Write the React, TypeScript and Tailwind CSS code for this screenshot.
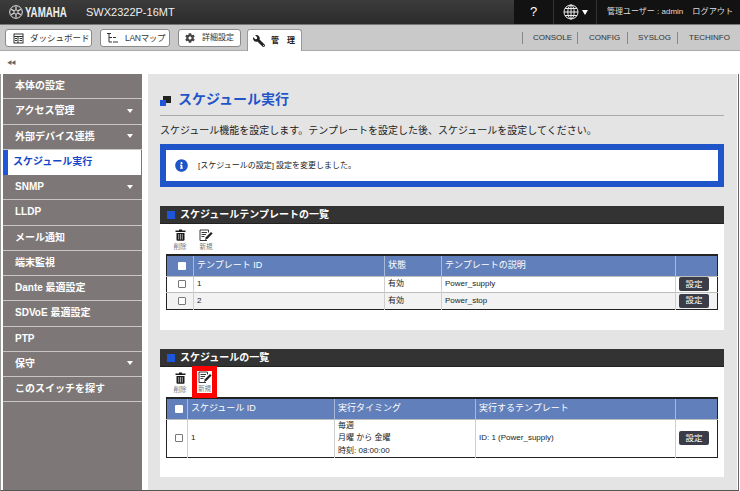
import React from "react";
import { FaWrench, FaCog, FaInfoCircle } from "react-icons/fa";

const font = { fontFamily: '"Liberation Sans","Noto Sans CJK JP",sans-serif' };

function TopBtn({ icon, label, cls }: { icon: React.ReactNode; label: string; cls: string }) {
  return (
    <div className={`${cls} h-[18px] shrink-0 flex items-center bg-white border border-[#8a8a8a] rounded-[3px] text-[8.5px] text-[#333] whitespace-nowrap`}>
      {icon}
      <span>{label}</span>
    </div>
  );
}

const DashIcon = () => (
  <svg width="11" height="11" viewBox="0 0 11 11" fill="none" stroke="#333" strokeWidth="1">
    <rect x="1" y="1" width="9" height="9" />
    <path d="M1 3.5h9M5 3.5v6.5M6.5 5.5h2.5M6.5 7.5h2.5M2 5.5h2M2 7.5h2" />
  </svg>
);
const MapIcon = () => (
  <svg width="12" height="12" viewBox="0 0 12 12" fill="none" stroke="#333" strokeWidth="1">
    <path d="M1 1.5h4M3 1.5v8.5M3 5.5h3M3 10h3M7 10h5M7 5.5h3" />
  </svg>
);
const Globe = () => (
  <svg width="16" height="16" viewBox="0 0 16 16" fill="none" stroke="#eee" strokeWidth="1">
    <circle cx="8" cy="8" r="7" />
    <ellipse cx="8" cy="8" rx="3.2" ry="7" />
    <path d="M8 1v14M1 8h14M2 4.5h12M2 11.5h12" />
  </svg>
);
const Emblem = () => (
  <svg width="14" height="14" viewBox="0 0 14 14" fill="none" stroke="#e8e8e8">
    <circle cx="7" cy="7" r="6.3" strokeWidth="1" />
    <circle cx="7" cy="7" r="2" strokeWidth="0.8" />
    <path d="M7 1.5v3.5M7 9v3.5M2.2 4.2l3 1.8M8.8 8l3 1.8M11.8 4.2l-3 1.8M5.2 8l-3 1.8" strokeWidth="1.1" />
  </svg>
);
const TrashIcon = () => (
  <svg width="11" height="12" viewBox="0 0 11 12">
    <path d="M4 0.5h3v1h3.5v1.5H0.5V1.5H4z" fill="#1a1a1a" />
    <path d="M1.5 4h8v6.7a1 1 0 0 1-1 1h-6a1 1 0 0 1-1-1z" fill="#1a1a1a" />
    <path d="M3.7 5v5.5M5.5 5v5.5M7.3 5v5.5" stroke="#fff" strokeWidth="0.6" />
  </svg>
);
const NewIcon = () => (
  <svg width="14" height="13" viewBox="0 0 14 13" fill="none" stroke="#222" strokeWidth="0.9">
    <path d="M8 11.5H1V1h8.5v2.5" />
    <path d="M2.5 3.5h5.5M2.5 5.5h4.5M2.5 7.5h3" />
    <path d="M6 11l.8-2.7L12 3l1.6 1.6-5 5.2z" fill="#222" stroke="none" />
  </svg>
);

function Tool({ kind, boxed }: { kind: "del" | "new"; boxed?: boolean }) {
  const del = kind === "del";
  return (
    <div
      className={
        boxed
          ? "w-[25px] h-[32px] shrink-0 -ml-[1px] -mt-[5px] border-[5px] border-[#f00] flex flex-col items-center justify-center bg-white"
          : "w-[26px] shrink-0 flex flex-col items-center"
      }
    >
      <div className="h-[14px] flex items-center">{del ? <TrashIcon /> : <NewIcon />}</div>
      <span className="text-[6.5px] leading-[9px] text-[#777] whitespace-nowrap">{del ? "削除" : "新規"}</span>
    </div>
  );
}

function SectionHead({ title }: { title: string }) {
  return (
    <div className="h-[18px] bg-[#333333] flex items-center pl-[7px] gap-[5px] border-b border-[#222]">
      <div className="w-[8px] h-[8px] bg-[#1f55d8]" />
      <span className="text-white text-[10px] font-bold leading-none">{title}</span>
    </div>
  );
}

function Check({ head }: { head?: boolean }) {
  return (
    <div className={`mx-auto w-[8px] h-[8px] rounded-[1px] ${head ? "bg-white" : "bg-white border border-[#777]"}`} />
  );
}

const SetBtn = () => (
  <div className="ml-[3px] w-[30px] h-[14px] flex items-center justify-center bg-[#3a3d47] rounded-[2px] text-white text-[8.5px]">設定</div>
);

const th = "border-r border-[#a9b8d6] text-left text-white font-normal text-[9px] pl-[3px] p-0";
const td = "border-r border-[#cfcfcf] text-[8px] text-[#222] pl-[3px] p-0";

const menu: [string, boolean, boolean?][] = [
  ["本体の設定", false],
  ["アクセス管理", true],
  ["外部デバイス連携", true],
  ["スケジュール実行", false, true],
  ["SNMP", true],
  ["LLDP", false],
  ["メール通知", false],
  ["端末監視", false],
  ["Dante 最適設定", false],
  ["SDVoE 最適設定", false],
  ["PTP", false],
  ["保守", true],
  ["このスイッチを探す", false],
];

export default function App() {
  return (
    <div style={font} className="w-[740px] h-[491px] overflow-hidden bg-white flex flex-col">
      {/* Header */}
      <div className="h-[24px] shrink-0 flex bg-gradient-to-b from-[#3c3c3c] to-[#2b2b2b]">
        <div className="flex items-center pl-[9px] w-[514px] shrink-0">
          <Emblem />
          <span className="ml-[2px] w-[48px] shrink-0 text-[15px] font-bold text-[#eee] scale-x-[0.65] origin-left whitespace-nowrap">YAMAHA</span>
          <span className="ml-[13px] text-[11px] text-[#eee]">SWX2322P-16MT</span>
        </div>
        <div className="flex-1 flex items-center bg-[#121212] min-w-0">
          <div className="w-[40px] shrink-0 h-full flex items-center justify-center text-white text-[13px] border-r border-[#333]">?</div>
          <div className="w-[43px] shrink-0 h-full flex items-center pl-[9px] gap-[3px] border-r border-[#333]">
            <Globe />
            <span className="w-0 h-0 border-l-[3px] border-r-[3px] border-t-[5px] border-l-transparent border-r-transparent border-t-white" />
          </div>
          <span className="ml-[10px] text-[8px] text-[#ddd] whitespace-nowrap">管理ユーザー : admin</span>
          <span className="ml-[9px] text-[8.2px] text-[#ddd] whitespace-nowrap">ログアウト</span>
        </div>
      </div>
      {/* Tabs */}
      <div className="h-[27px] shrink-0 flex items-end bg-[#c9c9c9] border-t border-[#777] border-b border-b-[#aaa] pl-[5px]">
        <div className="flex items-center gap-[8px] mb-[3px] shrink-0">
          <TopBtn cls="w-[87px] pl-[7px] gap-[6px]" icon={<DashIcon />} label="ダッシュボード" />
          <TopBtn cls="w-[70px] pl-[5px] gap-[7px] tracking-[-0.3px]" icon={<MapIcon />} label="LANマップ" />
          <TopBtn cls="w-[63px] pl-[6px] gap-[7px] !text-[8px]" icon={<FaCog className="text-[10px] text-[#444]" />} label="詳細設定" />
        </div>
        <div className="ml-[6px] w-[55px] h-[22px] shrink-0 -mb-[1px] flex items-center pl-[5px] gap-[6px] bg-white border border-b-0 border-[#999] rounded-t-[3px] text-[8px] font-bold text-[#222] whitespace-nowrap">
          <FaWrench className="text-[12px] -scale-x-100" />
          <span>管　理</span>
        </div>
        <div className="ml-[220px] mb-[7px] h-[11px] flex items-center text-[8px] text-[#333] whitespace-nowrap shrink-0">
          <span className="w-[56px] border-l border-r border-[#888] pl-[10px]">CONSOLE</span>
          <span className="w-[50px] pl-[11px] border-r border-[#888]">CONFIG</span>
          <span className="w-[50px] pl-[10px] border-r border-[#888]">SYSLOG</span>
          <span className="pl-[11px]">TECHINFO</span>
        </div>
      </div>
      {/* back arrows */}
      <div className="h-[23px] shrink-0 flex items-center pl-[7px] text-[5px] text-[#666] tracking-[-1px]">◀◀</div>
      {/* Body */}
      <div className="flex-1 flex min-h-0 pl-[2px] pr-[1px] w-[739px] border-l border-[#999] border-r border-r-[#666] border-b border-b-[#555]">
        <nav className="w-[139px] shrink-0 bg-[#7d7877] flex flex-col">
          {menu.map(([label, arrow, active]) => (
            <div
              key={label}
              className={
                active
                  ? "h-[25.25px] shrink-0 flex items-center bg-white text-[#1646c8] font-bold text-[10px] pl-[5px] pb-[1px] border-l-[5px] border-[#1f55d8] border-r border-r-[#7d7877]"
                  : "h-[25.25px] shrink-0 flex items-center justify-between text-white font-bold text-[10px] pl-[12px] pr-[9px] pb-[1px] border-b border-[#c8c6c4]"
              }
            >
              <span>{label}</span>
              {arrow && <span className="w-0 h-0 border-l-[3px] border-r-[3px] border-t-[4px] border-l-transparent border-r-transparent border-t-white" />}
            </div>
          ))}
        </nav>
        <main className="ml-[6px] flex-1 bg-[#e4e4e4] pl-[12px] pr-[13px] min-w-0">
          <div className="h-[42px] flex items-center gap-[7px] border-b border-[#aaa] pt-[8px]">
            <svg width="11" height="11" viewBox="0 0 11 11" className="mt-[3px]">
              <rect x="3" y="1" width="8" height="7" fill="#222" />
              <rect x="0" y="5" width="6" height="6" fill="#1f55d8" />
            </svg>
            <h1 className="text-[14px] font-bold text-[#1f55c8] leading-none">スケジュール実行</h1>
          </div>
          <p className="h-[28px] flex items-center text-[10px] text-[#222] whitespace-nowrap">スケジュール機能を設定します。テンプレートを設定した後、スケジュールを設定してください。</p>
          <div className="h-[43px] border-[6px] border-[#1f55c8] bg-white flex items-center pl-[9px] gap-[10px]">
            <FaInfoCircle className="text-[13px] text-[#1f55c8]" />
            <span className="text-[8px] text-[#222]">[スケジュールの設定] 設定を変更しました。</span>
          </div>

          <section className="mt-[19px] h-[124px] bg-white">
            <SectionHead title="スケジュールテンプレートの一覧" />
            <div className="flex pl-[7px] pt-[4px] h-[30px]">
              <Tool kind="del" />
              <Tool kind="new" />
            </div>
            <table className="ml-[6px] w-[552px] table-fixed border-collapse border-t-2 border-x border-b border-[#222]">
              <colgroup>
                <col className="w-[27px]" /><col className="w-[191px]" /><col className="w-[57px]" /><col className="w-[234px]" /><col />
              </colgroup>
              <thead>
                <tr className="h-[21px] bg-[#617fba]">
                  <th className={th}><Check head /></th>
                  <th className={th}>テンプレート ID</th>
                  <th className={th}>状態</th>
                  <th className={th}>テンプレートの説明</th>
                  <th className="p-0" />
                </tr>
              </thead>
              <tbody>
                {[["1", "Power_supply", "bg-white"], ["2", "Power_stop", "bg-[#f2f2f2]"]].map(([id, d, bg]) => (
                  <tr key={id} className={`h-[16.5px] border-t border-[#bdbdbd] ${bg}`}>
                    <td className={td}><Check /></td>
                    <td className={td}>{id}</td>
                    <td className={td}>有効</td>
                    <td className={td}>{d}</td>
                    <td className="p-0"><SetBtn /></td>
                  </tr>
                ))}
              </tbody>
            </table>
          </section>

          <section className="mt-[19px] h-[128px] bg-white">
            <SectionHead title="スケジュールの一覧" />
            <div className="flex pl-[7px] pt-[4px] h-[30px]">
              <Tool kind="del" />
              <Tool kind="new" boxed />
            </div>
            <table className="ml-[6px] w-[552px] table-fixed border-collapse border-t-2 border-x border-b border-[#222]">
              <colgroup>
                <col className="w-[21px]" /><col className="w-[147px]" /><col className="w-[141px]" /><col className="w-[200px]" /><col />
              </colgroup>
              <thead>
                <tr className="h-[21px] bg-[#617fba]">
                  <th className={th}><Check head /></th>
                  <th className={th}>スケジュール ID</th>
                  <th className={th}>実行タイミング</th>
                  <th className={th}>実行するテンプレート</th>
                  <th className="p-0" />
                </tr>
              </thead>
              <tbody>
                <tr className="h-[38px] border-t border-[#bdbdbd]">
                  <td className={td}><Check /></td>
                  <td className={td}>1</td>
                  <td className={`${td} leading-[12.5px]`}>
                    <div>毎週</div>
                    <div>月曜 から 金曜</div>
                    <div>時刻: 08:00:00</div>
                  </td>
                  <td className={td}>ID: 1 (Power_supply)</td>
                  <td className="p-0"><SetBtn /></td>
                </tr>
              </tbody>
            </table>
          </section>
        </main>
      </div>
    </div>
  );
}
